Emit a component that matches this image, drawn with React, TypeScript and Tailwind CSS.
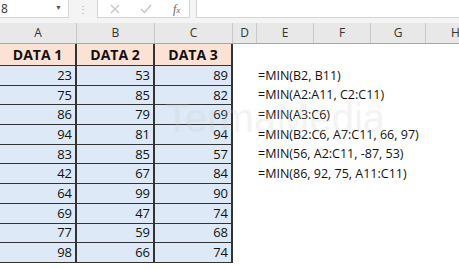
import React from 'react';

const rows = [
  [23, 53, 89],
  [75, 85, 82],
  [86, 79, 69],
  [94, 81, 94],
  [83, 85, 57],
  [42, 67, 84],
  [64, 99, 90],
  [69, 47, 74],
  [77, 59, 68],
  [98, 66, 74],
];

const formulas = [
  '=MIN(B2, B11)',
  '=MIN(A2:A11, C2:C11)',
  '=MIN(A3:C6)',
  '=MIN(B2:C6, A7:C11, 66, 97)',
  '=MIN(56, A2:C11, -87, 53)',
  '=MIN(86, 92, 75, A11:C11)',
];

const cols = [
  { name: 'A', w: 'w-[77px]' },
  { name: 'B', w: 'w-[78px]' },
  { name: 'C', w: 'w-[78px]' },
  { name: 'D', w: 'w-[24px]' },
  { name: 'E', w: 'w-[57px]' },
  { name: 'F', w: 'w-[57px]' },
  { name: 'G', w: 'w-[55px]' },
  { name: 'H', w: 'w-[60px]' },
];

export default function App() {
  return (
    <div className="relative w-[459px] h-[269px] overflow-hidden bg-white font-['Open_Sans',sans-serif] text-[#222]">
      {/* Formula bar */}
      <div className="flex h-[18px] items-stretch bg-[#f4f4f4]">
        <div className="flex w-[69px] items-center justify-between border-b border-r border-[#d4d4d4] bg-white pl-[1px] pr-[6px] text-[12px] text-[#333]">
          <span>8</span>
          <span className="text-[7px] text-[#555]">▼</span>
        </div>
        <div className="flex w-[28px] items-center justify-center text-[10px] leading-none text-[#aaa]">⋮</div>
        <div className="flex w-[93px] items-center border-b border-x border-[#d4d4d4] bg-white text-[#c4c4c4]">
          <svg className="ml-[12px]" width="10" height="10" viewBox="0 0 10 10">
            <path d="M1 1 L9 9 M9 1 L1 9" fill="none" stroke="#c4c4c4" strokeWidth="1.3" />
          </svg>
          <svg className="ml-[20px]" width="12" height="10" viewBox="0 0 12 10">
            <path d="M1 5 L4.5 8.5 L11 1" fill="none" stroke="#c4c4c4" strokeWidth="1.4" />
          </svg>
          <span className="ml-[21px] font-['Liberation_Serif',serif] text-[12px] italic leading-none text-[#666]">
            f<span className="text-[9px]">x</span>
          </span>
        </div>
        <div className="ml-[6px] flex-1 border-b border-l border-[#d4d4d4] bg-white" />
      </div>
      <div className="h-[5px] bg-[#f4f4f4]" />

      {/* Column headers */}
      <div className="flex h-[21px] border-b border-[#a8a8a8] bg-[#e8e8e8]">
        {cols.map((c) => (
          <div
            key={c.name}
            className={`${c.w} flex shrink-0 items-center justify-center border-r border-[#c8c8c8] text-[12px] text-[#333]`}
          >
            {c.name}
          </div>
        ))}
      </div>

      {/* Data header */}
      <div className="flex h-[22px]">
        {['DATA 1', 'DATA 2', 'DATA 3'].map((t, i) => (
          <div
            key={t}
            className={`${i === 0 ? 'w-[77px]' : 'w-[78px]'} flex shrink-0 items-center justify-center border-b border-r-2 border-[#333] bg-[#fbe2d5] text-[14px] font-bold text-[#111]`}
          >
            {t}
          </div>
        ))}
      </div>

      {/* Data rows */}
      {rows.map((r, i) => (
        <div key={i} className="flex h-[19.7px]">
          {r.map((v, j) => (
            <div
              key={j}
              className={`${j === 0 ? 'w-[77px]' : 'w-[78px]'} flex shrink-0 items-center justify-end border-b border-r-2 border-[#333] bg-[#dde9f6] pr-[3px] text-[13px] leading-none text-[#111]`}
            >
              {v}
            </div>
          ))}
          <div className="w-[25px] shrink-0" />
          <div className="flex items-center whitespace-nowrap text-[12.5px] leading-none text-[#111]">
            {formulas[i] ?? ''}
          </div>
        </div>
      ))}

      {/* watermark */}
      <div className="pointer-events-none absolute left-[165px] top-[98px] font-['Liberation_Sans_Narrow','Liberation_Sans',sans-serif] text-[40px] leading-none text-[#c8c8c8] opacity-20">
        TermaMedia
      </div>
    </div>
  );
}
